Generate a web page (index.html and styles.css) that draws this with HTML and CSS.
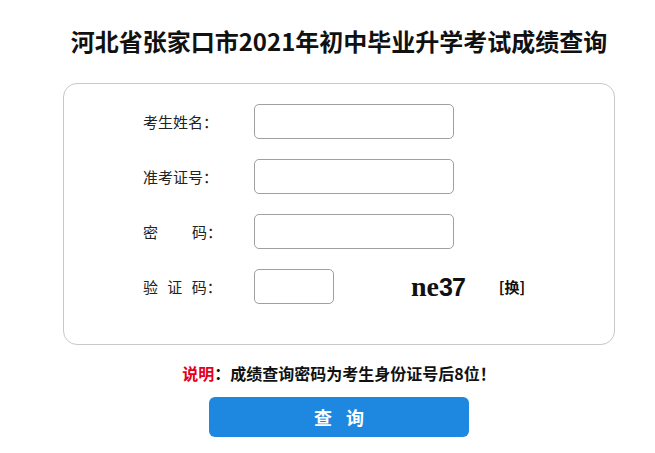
FILE: index.html
```html
<!DOCTYPE html>
<html lang="zh-CN">
<head>
    <meta charset="UTF-8">
    <meta name="viewport" content="width=device-width, initial-scale=1.0">
    <title>河北省张家口市2021年初中毕业升学考试成绩查询</title>
    <link rel="stylesheet" href="styles.css">
</head>
<body>
    <div class="wrap">
        <h1 class="titulo">河北省张家口市2021年初中毕业升学考试成绩查询</h1>

        <form class="form-cx" onsubmit="return false;">
            <div class="linha">
                <label class="rotulo" for="xm">考生姓名：</label>
                <input id="xm" class="campo" type="text">
            </div>
            <div class="linha">
                <label class="rotulo" for="zkzh">准考证号：</label>
                <input id="zkzh" class="campo" type="text">
            </div>
            <div class="linha">
                <label class="rotulo" for="mm"><span class="mi">密</span>码：</label>
                <input id="mm" class="campo" type="password">
            </div>
            <div class="linha">
                <label class="rotulo rotulo-yzm" for="yzm">验 证 码：</label>
                <input id="yzm" class="campo campo-curto" type="text">
                <span class="yzm-img"><span class="yzm-a">ne</span><span class="yzm-b">37</span></span>
                <a href="#" class="trocar">[换]</a>
            </div>
        </form>

        <p class="aviso"><span class="aviso-tit">说明</span>：成绩查询密码为考生身份证号后8位！</p>

        <div class="acoes">
            <button type="button" class="btn-cx">查询</button>
        </div>
    </div>
</body>
</html>
```

FILE: styles.css
```css
* { box-sizing: border-box; margin: 0; padding: 0; }
body {
    font-family: 'Noto Sans CJK SC', 'Noto Sans', sans-serif;
    color: #111;
    background: #fff;
}
.wrap { width: 552px; margin-left: 63px; }
.titulo {
    font-size: 24px; font-weight: 700; line-height: 40px;
    text-align: center; margin: 21px 0 22px; white-space: nowrap;
    color: #111;
}
.form-cx {
    border: 1px solid #c8c8c8; border-radius: 14px;
    padding: 20px 20px 40px 79px;
    display: flex; flex-direction: column; gap: 20px;
}
.linha { display: flex; align-items: center; height: 35px; }
.rotulo {
    width: 111px; font-size: 15px; color: #222; white-space: nowrap;
}
.mi { margin-right: 34px; }
.rotulo-yzm { word-spacing: 6px; }
.campo {
    width: 200px; height: 35px; border: 1px solid #a0a0a0;
    border-radius: 5px; background: #fff; font-size: 14px; padding: 0 6px;
}
.campo-curto { width: 80px; }
.yzm-img { margin-left: 77px; font-weight: 700; color: #111; line-height: 1; }
.yzm-a { font-family: 'Liberation Serif', serif; font-size: 28px; }
.yzm-b { font-family: 'Liberation Sans', sans-serif; font-size: 25px; letter-spacing: -1px; }
.trocar {
    margin-left: 34px; font-size: 15px; font-weight: 700;
    color: #111; text-decoration: none;
}
.aviso {
    font-size: 16px; font-weight: 700; line-height: 24px;
    text-align: center; margin-top: 16px; white-space: nowrap;
}
.aviso-tit { color: #e4001b; }
.acoes { display: flex; justify-content: center; margin-top: 12px; }
.btn-cx {
    width: 260px; height: 40px; border: none; border-radius: 6px;
    background: #1e88e1; color: #fff; font-family: inherit;
    font-size: 18px; font-weight: 700; letter-spacing: 14px; text-indent: 14px;
    cursor: pointer;
}
```
